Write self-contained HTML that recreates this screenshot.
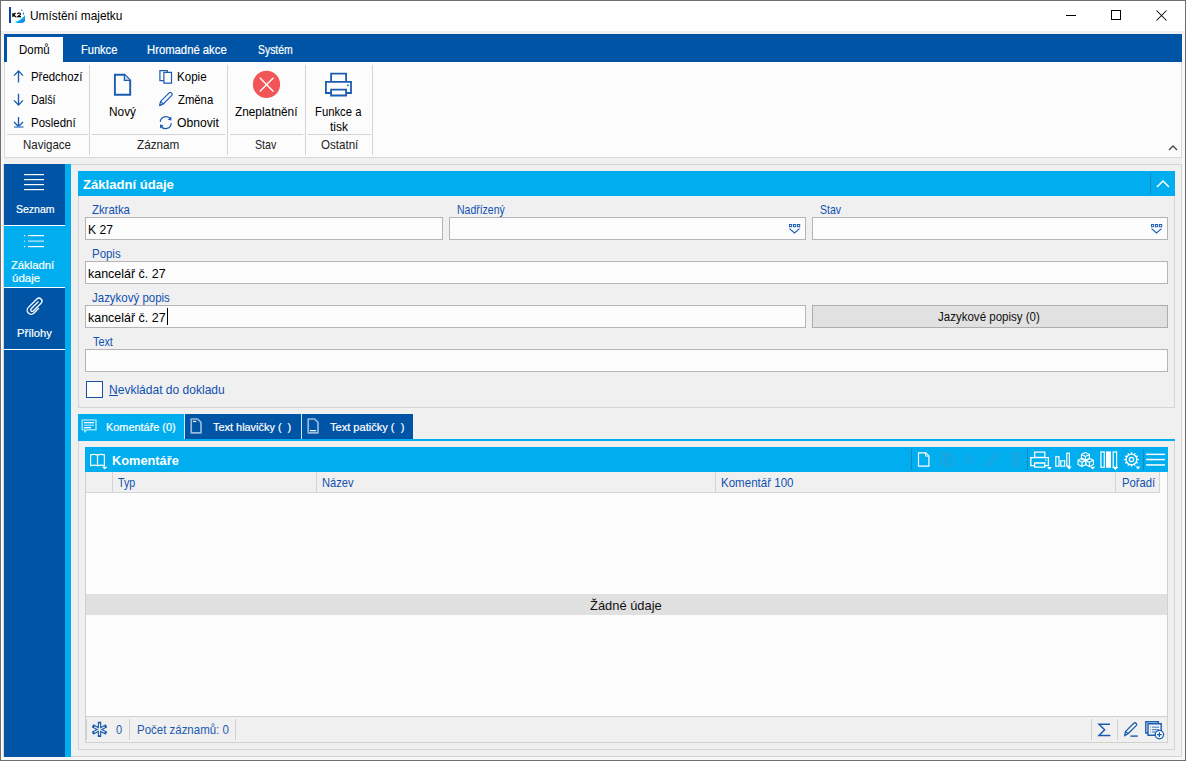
<!DOCTYPE html>
<html><head><meta charset="utf-8"><style>
html,body{margin:0;padding:0;width:1186px;height:761px;overflow:hidden;background:#f0f0f0}
.a{position:absolute}
.t{font-family:"Liberation Sans",sans-serif;white-space:nowrap}
</style></head><body>
<div class="a" style="left:0px;top:0px;width:1186px;height:761px;background:#f0f0f0;"></div>
<div class="a" style="left:0px;top:0px;width:1186px;height:31px;background:#ffffff;"></div>
<div class="a" style="left:1px;top:31px;width:3px;height:726px;background:#f8f8f8;"></div>
<div class="a" style="left:1182px;top:31px;width:3px;height:726px;background:#f8f8f8;"></div>
<div class="a" style="left:1px;top:757px;width:1184px;height:3px;background:#f8f8f8;"></div>
<div class="a" style="left:1px;top:31px;width:1184px;height:3px;background:#f0f0f0;"></div>
<div class="a" style="left:0px;top:0px;width:1186px;height:1px;background:#6e6e6e;"></div>
<div class="a" style="left:0px;top:760px;width:1186px;height:1px;background:#6e6e6e;"></div>
<div class="a" style="left:0px;top:0px;width:1px;height:761px;background:#6e6e6e;"></div>
<div class="a" style="left:1185px;top:0px;width:1px;height:761px;background:#6e6e6e;"></div>
<div class="a t" style="top:9px;color:#000;font-size:13px;line-height:13px;left:29.95px;transform-origin:0 0;transform:scaleX(0.9135);">Umístění majetku</div>
<div class="a" style="left:1066px;top:15px;width:10px;height:1px;background:#000;"></div>
<div class="a" style="left:1111px;top:10px;width:10px;height:10px;border:1px solid #000;box-sizing:border-box;"></div>
<svg class="a" style="left:1156.2px;top:9.5px;" width="11" height="11" viewBox="0 0 11 11"><path d="M0.5 0.5 L10.5 10.5 M10.5 0.5 L0.5 10.5" stroke="#000" stroke-width="1.05" fill="none"/></svg>
<div class="a" style="left:9px;top:7px;width:2px;height:16px;background:#0b46a8;"></div>
<svg class="a" style="left:0px;top:0px;" width="30" height="30" viewBox="0 0 30 30"><defs><linearGradient id="k2g" x1="0" y1="0" x2="1" y2="1"><stop offset="0" stop-color="#38f0c8"/><stop offset="0.5" stop-color="#10c8f0"/><stop offset="1" stop-color="#0a50f0"/></linearGradient></defs><path d="M12.9 13 V17 M13.2 15.2 L15.6 13 M13.6 14.8 L15.8 17" stroke="#000" stroke-width="1.2" fill="none"/><path d="M17.4 13.9 Q18 12.8 19.4 13 Q20.8 13.3 20.3 14.6 L17.6 16.6 H21" stroke="#000" stroke-width="1.1" fill="none"/><path d="M15 21.6 Q20.5 20.8 25 15 V20.4 Q24.5 22.8 21 22.9 L17 22.9 Q15.2 22.6 15 21.6 Z" fill="url(#k2g)"/><circle cx="21.6" cy="10.3" r="0.8" fill="#3a7af0"/><ellipse cx="23.4" cy="13.6" rx="0.6" ry="1.3" fill="#3a7af0"/></svg>
<div class="a" style="left:4px;top:34px;width:1178px;height:28px;background:#0054a6;"></div>
<div class="a" style="left:4px;top:62px;width:1178px;height:96px;background:#fcfcfc;border:1px solid #d9d9d9;box-sizing:border-box;border-top:none;"></div>
<div class="a" style="left:7px;top:37px;width:56px;height:25px;background:#fcfcfc;"></div>
<div class="a t" style="top:43px;color:#000;font-size:13px;line-height:13px;left:19.13px;transform-origin:0 0;transform:scaleX(0.8855);">Domů</div>
<div class="a t" style="top:43px;color:#fff;font-size:13px;line-height:13px;left:80.60px;transform-origin:0 0;transform:scaleX(0.8520);-webkit-text-stroke:0.2px #fff;">Funkce</div>
<div class="a t" style="top:43px;color:#fff;font-size:13px;line-height:13px;left:147.25px;transform-origin:0 0;transform:scaleX(0.8683);-webkit-text-stroke:0.2px #fff;">Hromadné akce</div>
<div class="a t" style="top:43px;color:#fff;font-size:13px;line-height:13px;left:257.63px;transform-origin:0 0;transform:scaleX(0.8016);-webkit-text-stroke:0.2px #fff;">Systém</div>
<div class="a" style="left:89px;top:65px;width:1px;height:90px;background:#d4d4d4;"></div>
<div class="a" style="left:227px;top:65px;width:1px;height:90px;background:#d4d4d4;"></div>
<div class="a" style="left:305px;top:65px;width:1px;height:90px;background:#d4d4d4;"></div>
<div class="a" style="left:372px;top:65px;width:1px;height:90px;background:#d4d4d4;"></div>
<div class="a" style="left:7px;top:134px;width:81px;height:1px;background:#d4d4d4;"></div>
<div class="a" style="left:92px;top:134px;width:133px;height:1px;background:#d4d4d4;"></div>
<div class="a" style="left:230px;top:134px;width:73px;height:1px;background:#d4d4d4;"></div>
<div class="a" style="left:308px;top:134px;width:63px;height:1px;background:#d4d4d4;"></div>
<div class="a t" style="top:138px;color:#222;font-size:13px;line-height:13px;left:22.86px;transform-origin:0 0;transform:scaleX(0.8849);">Navigace</div>
<div class="a t" style="top:138px;color:#222;font-size:13px;line-height:13px;left:137.00px;transform-origin:0 0;transform:scaleX(0.9017);">Záznam</div>
<div class="a t" style="top:138px;color:#222;font-size:13px;line-height:13px;left:255.25px;transform-origin:0 0;transform:scaleX(0.8196);">Stav</div>
<div class="a t" style="top:138px;color:#222;font-size:13px;line-height:13px;left:320.92px;transform-origin:0 0;transform:scaleX(0.8904);">Ostatní</div>
<div class="a t" style="top:70px;color:#000;font-size:13px;line-height:13px;left:30.52px;transform-origin:0 0;transform:scaleX(0.8783);">Předchozí</div>
<div class="a t" style="top:93px;color:#000;font-size:13px;line-height:13px;left:30.61px;transform-origin:0 0;transform:scaleX(0.8302);">Další</div>
<div class="a t" style="top:116px;color:#000;font-size:13px;line-height:13px;left:30.50px;transform-origin:0 0;transform:scaleX(0.8815);">Poslední</div>
<div class="a t" style="top:105px;color:#000;font-size:13px;line-height:13px;left:109.39px;transform-origin:0 0;transform:scaleX(0.9115);">Nový</div>
<div class="a t" style="top:70px;color:#000;font-size:13px;line-height:13px;left:177.48px;transform-origin:0 0;transform:scaleX(0.8904);">Kopie</div>
<div class="a t" style="top:93px;color:#000;font-size:13px;line-height:13px;left:177.70px;transform-origin:0 0;transform:scaleX(0.8693);">Změna</div>
<div class="a t" style="top:116px;color:#000;font-size:13px;line-height:13px;left:177.47px;transform-origin:0 0;transform:scaleX(0.9361);">Obnovit</div>
<div class="a t" style="top:105px;color:#000;font-size:13px;line-height:13px;left:235.35px;transform-origin:0 0;transform:scaleX(0.9092);">Zneplatnění</div>
<div class="a t" style="top:105px;color:#000;font-size:13px;line-height:13px;left:314.59px;transform-origin:0 0;transform:scaleX(0.8680);">Funkce a</div>
<div class="a t" style="top:120px;color:#000;font-size:13px;line-height:13px;left:330.00px;transform-origin:0 0;transform:scaleX(0.9282);">tisk</div>
<svg class="a" style="left:1167.5px;top:145px;" width="10" height="7" viewBox="0 0 10 7"><path d="M1 5 L5 1 L9 5" stroke="#444" stroke-width="1.3" fill="none"/></svg>
<svg class="a" style="left:0px;top:0px;" width="30" height="135" viewBox="0 0 30 135"><g stroke="#1a5cb0" stroke-width="1.3" fill="none"><path d="M18.5 71 V82.5 M14 75.6 L18.5 71 L23 75.6"/><path d="M18.5 93.7 V105.3 M14 100.4 L18.5 105 L23 100.4"/><path d="M18.5 117 V126.5 M14 122 L18.5 126.5 L23 122"/></g><path d="M14 127 H23.5" stroke="#5a8fd0" stroke-width="1.6"/></svg>
<svg class="a" style="left:0px;top:0px;" width="135" height="100" viewBox="0 0 135 100"><path d="M114.9 74.7 H124.6 L130.2 80.3 V94.7 H114.9 Z" stroke="#1a5cb0" stroke-width="1.9" fill="none" stroke-linejoin="miter"/><path d="M124.4 74.8 V80.4 H130.1" stroke="#1a5cb0" stroke-width="1.3" fill="#c9daf0"/></svg>
<svg class="a" style="left:0px;top:0px;" width="180" height="90" viewBox="0 0 180 90"><g stroke="#1a5cb0" stroke-width="1.2" fill="#fcfcfc"><path d="M159.9 70.6 H167.3 V80.6 H159.9 Z"/><path d="M163.9 72.4 H171.5 V83.2 H163.9 Z"/></g></svg>
<svg class="a" style="left:0px;top:0px;" width="180" height="110" viewBox="0 0 180 110"><g stroke="#1a5cb0" stroke-width="1.2" fill="none" stroke-linejoin="round"><path d="M159.6 105.6 L160.6 101.4 L169.2 92.8 Q170.2 92 171.2 92.8 L172 93.6 Q172.6 94.6 171.8 95.4 L163.2 104 Z"/><path d="M160.8 101.6 L163 103.8"/></g></svg>
<svg class="a" style="left:0px;top:0px;" width="180" height="132" viewBox="0 0 180 132"><g stroke="#1a5cb0" stroke-width="1.3" fill="none"><path d="M160.3 121.8 A5.6 5.6 0 0 1 170.6 119.2"/><path d="M171.2 123.2 A5.6 5.6 0 0 1 160.8 125.8"/></g><path d="M167.8 119.8 L171.4 120.4 L171.4 116.6 Z" fill="#1a5cb0"/><path d="M163.6 125.2 L160 124.6 L160 128.4 Z" fill="#1a5cb0"/></svg>
<svg class="a" style="left:0px;top:0px;" width="300" height="100" viewBox="0 0 300 100"><circle cx="266.5" cy="84.4" r="13.6" fill="#f15557"/><path d="M259.8 77.8 L273.4 91.4 M273.4 77.8 L259.8 91.4" stroke="#fff" stroke-width="1.4"/></svg>
<svg class="a" style="left:0px;top:0px;" width="360" height="100" viewBox="0 0 360 100"><g stroke="#1a5cb0" stroke-width="1.8" fill="#fcfcfc"><path d="M331.1 73.7 H346.1 V81.8 H331.1 Z"/><path d="M325.9 81.8 H351 V93 H325.9 Z"/><path d="M331.1 89.6 H346.1 V95.5 H331.1 Z"/></g><rect x="347.2" y="84.6" width="1.6" height="1.6" fill="#1a5cb0"/></svg>
<div class="a" style="left:3px;top:164px;width:1179px;height:593px;border:1px solid #d5d5d5;box-sizing:border-box;"></div>
<div class="a" style="left:4px;top:164px;width:61px;height:593px;background:#0054a6;"></div>
<div class="a" style="left:65px;top:164px;width:6px;height:593px;background:#00aeef;"></div>
<div class="a" style="left:4px;top:226px;width:61px;height:61px;background:#00aeef;"></div>
<div class="a" style="left:4px;top:225px;width:61px;height:1px;background:#ffffff;"></div>
<div class="a" style="left:4px;top:287px;width:61px;height:1px;background:#ffffff;"></div>
<div class="a" style="left:4px;top:349px;width:61px;height:1px;background:#ffffff;"></div>
<div class="a t" style="top:204px;color:#fff;font-size:11.5px;line-height:11.5px;left:15.80px;transform-origin:0 0;transform:scaleX(0.9142);-webkit-text-stroke:0.2px #fff;">Seznam</div>
<div class="a t" style="top:260px;color:#fff;font-size:11.5px;line-height:11.5px;left:11.20px;transform-origin:0 0;transform:scaleX(0.9779);-webkit-text-stroke:0.2px #fff;">Základní</div>
<div class="a t" style="top:273px;color:#fff;font-size:11.5px;line-height:11.5px;left:11.61px;transform-origin:0 0;transform:scaleX(0.9975);-webkit-text-stroke:0.2px #fff;">údaje</div>
<div class="a t" style="top:328px;color:#fff;font-size:11.5px;line-height:11.5px;left:17.24px;transform-origin:0 0;transform:scaleX(0.9701);-webkit-text-stroke:0.2px #fff;">Přílohy</div>
<div class="a" style="left:78px;top:171px;width:1097px;height:237px;border:1px solid #d5d5d5;box-sizing:border-box;"></div>
<div class="a" style="left:78px;top:171px;width:1097px;height:25px;background:#00aeef;"></div>
<div class="a t" style="top:178px;color:#fff;font-size:13.5px;line-height:13.5px;font-weight:bold;left:82.70px;transform-origin:0 0;transform:scaleX(0.9693);">Základní údaje</div>
<div class="a" style="left:1150px;top:173px;width:1px;height:21px;background:#1a86bf;"></div>
<svg class="a" style="left:1156px;top:180px;" width="14" height="9" viewBox="0 0 14 9"><path d="M1 7 L7 1 L13 7" stroke="#fff" stroke-width="1.5" fill="none"/></svg>
<div class="a" style="left:85px;top:217px;width:358px;height:23px;background:#fcfcfc;border:1px solid #b4b4b4;box-sizing:border-box;"></div>
<div class="a" style="left:449px;top:217px;width:357px;height:23px;background:#fcfcfc;border:1px solid #b4b4b4;box-sizing:border-box;"></div>
<div class="a" style="left:812px;top:217px;width:356px;height:23px;background:#fcfcfc;border:1px solid #b4b4b4;box-sizing:border-box;"></div>
<div class="a" style="left:85px;top:261px;width:1083px;height:23px;background:#fcfcfc;border:1px solid #b4b4b4;box-sizing:border-box;"></div>
<div class="a" style="left:85px;top:305px;width:721px;height:23px;background:#fcfcfc;border:1px solid #b4b4b4;box-sizing:border-box;"></div>
<div class="a" style="left:85px;top:349px;width:1083px;height:23px;background:#fcfcfc;border:1px solid #b4b4b4;box-sizing:border-box;"></div>
<div class="a" style="left:812px;top:305px;width:356px;height:23px;background:#e1e1e1;border:1px solid #adadad;box-sizing:border-box;"></div>
<div class="a t" style="top:203px;color:#1050b0;font-size:13px;line-height:13px;left:92.35px;transform-origin:0 0;transform:scaleX(0.8740);">Zkratka</div>
<div class="a t" style="top:203px;color:#1050b0;font-size:13px;line-height:13px;left:456.70px;transform-origin:0 0;transform:scaleX(0.8056);">Nadřízený</div>
<div class="a t" style="top:203px;color:#1050b0;font-size:13px;line-height:13px;left:819.63px;transform-origin:0 0;transform:scaleX(0.8070);">Stav</div>
<div class="a t" style="top:247px;color:#1050b0;font-size:13px;line-height:13px;left:92.15px;transform-origin:0 0;transform:scaleX(0.8805);">Popis</div>
<div class="a t" style="top:291px;color:#1050b0;font-size:13px;line-height:13px;left:92.35px;transform-origin:0 0;transform:scaleX(0.8832);">Jazykový popis</div>
<div class="a t" style="top:335px;color:#1050b0;font-size:13px;line-height:13px;left:93.00px;transform-origin:0 0;transform:scaleX(0.8339);">Text</div>
<div class="a t" style="top:223px;color:#000;font-size:13px;line-height:13px;left:88.36px;transform-origin:0 0;transform:scaleX(0.9328);">K 27</div>
<div class="a t" style="top:267px;color:#000;font-size:13px;line-height:13px;left:88.43px;transform-origin:0 0;transform:scaleX(0.9586);">kancelář č. 27</div>
<div class="a t" style="top:311px;color:#000;font-size:13px;line-height:13px;left:88.43px;transform-origin:0 0;transform:scaleX(0.9586);">kancelář č. 27</div>
<div class="a" style="left:167px;top:308px;width:1px;height:17px;background:#000;"></div>
<div class="a t" style="top:310px;color:#111;font-size:13px;line-height:13px;left:938.35px;transform-origin:0 0;transform:scaleX(0.8864);">Jazykové popisy (0)</div>
<div class="a" style="left:86px;top:381px;width:17px;height:17px;background:#fcfcfc;border:1px solid #1a4fa0;box-sizing:border-box;"></div>
<div class="a t" style="top:383px;color:#1050b0;font-size:13px;line-height:13px;left:109.26px;transform-origin:0 0;transform:scaleX(0.9258);">Nevkládat do dokladu</div>
<div class="a" style="left:109px;top:395px;width:9px;height:1px;background:#1050b0;"></div>
<div class="a" style="left:78px;top:414px;width:106px;height:25px;background:#00aeef;"></div>
<div class="a" style="left:184px;top:414px;width:1px;height:25px;background:#cfe9f7;"></div>
<div class="a" style="left:185px;top:414px;width:116px;height:25px;background:#0054a6;"></div>
<div class="a" style="left:301px;top:414px;width:1px;height:25px;background:#cfe9f7;"></div>
<div class="a" style="left:302px;top:414px;width:111px;height:25px;background:#0054a6;"></div>
<div class="a" style="left:78px;top:439px;width:1097px;height:2px;background:#00aeef;"></div>
<div class="a t" style="top:422px;color:#fff;font-size:11px;line-height:11px;left:106.29px;transform-origin:0 0;transform:scaleX(0.9909);-webkit-text-stroke:0.2px #fff;">Komentáře (0)</div>
<div class="a t" style="top:422px;color:#fff;font-size:11px;line-height:11px;left:213.45px;transform-origin:0 0;transform:scaleX(0.9925);-webkit-text-stroke:0.2px #fff;">Text hlavičky (  )</div>
<div class="a t" style="top:422px;color:#fff;font-size:11px;line-height:11px;left:330.00px;transform-origin:0 0;transform:scaleX(1.0052);-webkit-text-stroke:0.2px #fff;">Text patičky (  )</div>
<div class="a" style="left:78px;top:441px;width:1097px;height:309px;border:1px solid #d5d5d5;box-sizing:border-box;border-top:none;"></div>
<div class="a" style="left:85px;top:447px;width:1083px;height:25px;background:#00aeef;"></div>
<div class="a t" style="top:454px;color:#fff;font-size:13px;line-height:13px;font-weight:bold;left:112.35px;transform-origin:0 0;transform:scaleX(0.9828);">Komentáře</div>
<div class="a" style="left:85px;top:472px;width:1083px;height:245px;background:#fcfcfc;border:1px solid #d0d0d0;box-sizing:border-box;border-top:none;"></div>
<div class="a" style="left:86px;top:472px;width:1074px;height:20px;background:#f0f0f0;"></div>
<div class="a" style="left:86px;top:492px;width:1074px;height:1px;background:#d4d4d4;"></div>
<div class="a" style="left:112px;top:472px;width:1px;height:20px;background:#d4d4d4;"></div>
<div class="a" style="left:316px;top:472px;width:1px;height:20px;background:#d4d4d4;"></div>
<div class="a" style="left:715px;top:472px;width:1px;height:20px;background:#d4d4d4;"></div>
<div class="a" style="left:1115px;top:472px;width:1px;height:20px;background:#d4d4d4;"></div>
<div class="a" style="left:1159px;top:472px;width:1px;height:21px;background:#d4d4d4;"></div>
<div class="a t" style="top:476px;color:#1050b0;font-size:13px;line-height:13px;left:118.00px;transform-origin:0 0;transform:scaleX(0.8203);">Typ</div>
<div class="a t" style="top:476px;color:#1050b0;font-size:13px;line-height:13px;left:322.22px;transform-origin:0 0;transform:scaleX(0.8576);">Název</div>
<div class="a t" style="top:476px;color:#1050b0;font-size:13px;line-height:13px;left:721.16px;transform-origin:0 0;transform:scaleX(0.8882);">Komentář 100</div>
<div class="a t" style="top:476px;color:#1050b0;font-size:13px;line-height:13px;left:1121.88px;transform-origin:0 0;transform:scaleX(0.8671);">Pořadí</div>
<div class="a" style="left:86px;top:594px;width:1081px;height:21px;background:#e0e0e0;"></div>
<div class="a t" style="top:599px;color:#111;font-size:13px;line-height:13px;left:590.35px;transform-origin:0 0;transform:scaleX(0.9920);">Žádné údaje</div>
<div class="a" style="left:85px;top:716px;width:1083px;height:27px;background:#f0f0f0;border:1px solid #d0d0d0;box-sizing:border-box;"></div>
<div class="a" style="left:86px;top:719px;width:1px;height:21px;background:#d0d0d0;"></div>
<div class="a" style="left:129px;top:719px;width:1px;height:21px;background:#d0d0d0;"></div>
<div class="a" style="left:235px;top:719px;width:1px;height:21px;background:#d0d0d0;"></div>
<div class="a" style="left:1091px;top:719px;width:1px;height:21px;background:#d0d0d0;"></div>
<div class="a" style="left:1117px;top:719px;width:1px;height:21px;background:#d0d0d0;"></div>
<div class="a t" style="top:723px;color:#1a5ab0;font-size:13px;line-height:13px;left:115.81px;transform-origin:0 0;transform:scaleX(0.8524);">0</div>
<div class="a t" style="top:723px;color:#1a5ab0;font-size:13px;line-height:13px;left:136.59px;transform-origin:0 0;transform:scaleX(0.8824);">Počet záznamů: 0</div>
<svg class="a" style="left:0px;top:0px;" width="50" height="200" viewBox="0 0 50 200"><g fill="#fff"><rect x="24" y="174" width="20" height="1.2"/><rect x="24" y="179" width="20" height="1.2"/><rect x="24" y="184" width="20" height="1.2"/><rect x="24" y="189" width="20" height="1.2"/></g></svg>
<svg class="a" style="left:0px;top:0px;" width="50" height="250" viewBox="0 0 50 250"><g fill="#fff"><rect x="24" y="235" width="1.2" height="1.2"/><rect x="28" y="235" width="16" height="1.2"/><rect x="24" y="246" width="1.2" height="1.2"/><rect x="28" y="246" width="16" height="1.2"/></g><g fill="#fff" opacity="0.75"><rect x="24" y="240.5" width="1.2" height="1.2"/><rect x="28" y="240.5" width="16" height="1.2"/></g></svg>
<svg class="a" style="left:0px;top:0px;" width="60" height="330" viewBox="0 0 60 330"><path transform="translate(34 306) rotate(-45)" d="M5.6 0 L-4 0 A1.5 1.5 0 0 0 -4 3 L7 3 A3 3 0 0 0 7 -3 L-5 -3 A4 4 0 0 0 -5 5 L1.4 5" stroke="#fff" stroke-width="1.3" fill="none" stroke-linecap="round"/></svg>
<svg class="a" style="left:0px;top:0px;" width="803" height="240" viewBox="0 0 803 240"><rect x="789.5" y="224.5" width="2.2" height="2.2" fill="none" stroke="#2060b8" stroke-width="1"/><rect x="793.5" y="224.5" width="2.2" height="2.2" fill="none" stroke="#2060b8" stroke-width="1"/><rect x="797.5" y="224.5" width="2.2" height="2.2" fill="none" stroke="#2060b8" stroke-width="1"/><path d="M789.5 228.6 L794.5 233 L799.5 228.6" stroke="#2060b8" stroke-width="1.2" fill="none"/></svg>
<svg class="a" style="left:0px;top:0px;" width="1165" height="240" viewBox="0 0 1165 240"><rect x="1151.5" y="224.5" width="2.2" height="2.2" fill="none" stroke="#2060b8" stroke-width="1"/><rect x="1155.5" y="224.5" width="2.2" height="2.2" fill="none" stroke="#2060b8" stroke-width="1"/><rect x="1159.5" y="224.5" width="2.2" height="2.2" fill="none" stroke="#2060b8" stroke-width="1"/><path d="M1151.5 228.6 L1156.5 233 L1161.5 228.6" stroke="#2060b8" stroke-width="1.2" fill="none"/></svg>
<svg class="a" style="left:0px;top:0px;" width="100" height="440" viewBox="0 0 100 440"><path d="M82.2 420 H96 V429.8 H87 L84.8 432 V429.8 H82.2 Z" stroke="rgba(255,255,255,0.6)" stroke-width="1.6" fill="none" stroke-linejoin="round"/><rect x="84" y="422" width="10" height="1.3" fill="#fff"/><rect x="84" y="424.6" width="10" height="1.3" fill="rgba(255,255,255,0.6)"/><rect x="84" y="427" width="7" height="1.3" fill="#fff"/></svg>
<svg class="a" style="left:0px;top:0px;" width="210" height="440" viewBox="0 0 210 440"><path d="M191.2 419 H197.6 L201 422.4 V432.8 H191.2 Z" stroke="rgba(200,220,240,0.75)" stroke-width="1.7" fill="none" stroke-linejoin="round"/><rect x="193" y="420.8" width="3.2" height="1.3" fill="#fff"/></svg>
<svg class="a" style="left:0px;top:0px;" width="330" height="440" viewBox="0 0 330 440"><path d="M308.2 419 H314.6 L318 422.4 V432.8 H308.2 Z" stroke="rgba(200,220,240,0.75)" stroke-width="1.7" fill="none" stroke-linejoin="round"/><rect x="310" y="430" width="6.2" height="1.3" fill="#fff"/></svg>
<svg class="a" style="left:0px;top:0px;" width="110" height="472" viewBox="0 0 110 472"><g stroke="#fff" stroke-width="1.2" fill="none"><path d="M90.6 454.8 Q94 453.8 97.5 454.8 Q101 453.8 104.4 454.8 V465.6 Q101 464.6 97.5 465.6 Q94 464.6 90.6 465.6 Z"/><path d="M97.5 454.8 V466"/></g><path d="M102 466.8 H107.5 L104.7 469.6 Z" fill="#fff"/></svg>
<div class="a" style="left:911px;top:449px;width:1px;height:21px;background:#1788bd;"></div>
<div class="a" style="left:1027px;top:449px;width:1px;height:21px;background:#1788bd;"></div>
<div class="a" style="left:1143px;top:449px;width:1px;height:21px;background:#1788bd;"></div>
<svg class="a" style="left:0px;top:0px;" width="935" height="472" viewBox="0 0 935 472"><path d="M918.5 452.8 H925.8 L928.9 455.9 V466.2 H918.5 Z" stroke="#fff" stroke-width="1.2" fill="none"/><path d="M925.6 452.8 V456.1 H928.9" stroke="#fff" stroke-width="1" fill="none"/></svg>
<svg class="a" style="left:0px;top:0px;" width="960" height="472" viewBox="0 0 960 472"><g stroke="#22a0d8" stroke-width="1.2" fill="none"><path d="M940.2 453 H948 V463.8 H940.2 Z"/><path d="M944.8 454.8 H953 V466 H944.8 Z"/></g></svg>
<svg class="a" style="left:0px;top:0px;" width="980" height="472" viewBox="0 0 980 472"><path d="M966 454.5 L974 459.8 L966 465 Z" stroke="#22a0d8" stroke-width="1.2" fill="none" stroke-linejoin="round"/></svg>
<svg class="a" style="left:0px;top:0px;" width="1005" height="472" viewBox="0 0 1005 472"><path d="M986.6 465.8 L987.4 462.4 L996.4 453.6 Q997.4 452.8 998.4 453.8 Q999.2 454.8 998.4 455.6 L989.6 464.6 Z" stroke="#22a0d8" stroke-width="1.2" fill="none"/></svg>
<svg class="a" style="left:0px;top:0px;" width="1030" height="472" viewBox="0 0 1030 472"><g stroke="#22a0d8" stroke-width="1.2" fill="none"><path d="M1010.2 454.2 H1021"/><path d="M1013.6 454 V452.8 H1017.6 V454"/><path d="M1011.2 454.5 L1012 466 H1019.4 L1020.2 454.5"/><path d="M1014.6 457 V463.5 M1016.8 457 V463.5"/></g></svg>
<svg class="a" style="left:0px;top:0px;" width="1060" height="472" viewBox="0 0 1060 472"><g stroke="#fff" stroke-width="1.3" fill="none"><path d="M1034.6 452.2 H1044.8 V457.4 H1034.6 Z"/><path d="M1030.8 457.6 H1048.4 V465.6 H1030.8 Z"/><path d="M1034.6 463 H1044.8 V467.2 H1034.6 Z" fill="#00aeef"/></g><rect x="1045" y="459.6" width="1.4" height="1" fill="#fff"/><path d="M1047 467 H1052 L1049.5 469.8 Z" fill="#fff"/></svg>
<svg class="a" style="left:0px;top:0px;" width="1080" height="472" viewBox="0 0 1080 472"><g stroke="#fff" stroke-width="1.2" fill="none"><rect x="1055.8" y="456.8" width="3.2" height="9.4"/><rect x="1060.8" y="460.8" width="3.8" height="5.4"/><rect x="1066.8" y="453.2" width="2.6" height="13"/></g><path d="M1066.6 466.6 H1071.8 L1069.2 469.4 Z" fill="#fff"/></svg>
<svg class="a" style="left:0px;top:0px;" width="1100" height="472" viewBox="0 0 1100 472"><g stroke="#fff" stroke-width="1.1" fill="none" stroke-linejoin="round"><path d="M1085.4 452.6 L1089.4 454.6 V459.0 L1085.4 461.0 L1081.4 459.0 V454.6 Z M1081.4 454.6 L1085.4 456.6 L1089.4 454.6 M1085.4 456.6 V461.0"/><path d="M1082 458.2 L1086 460.2 V464.59999999999997 L1082 466.59999999999997 L1078 464.59999999999997 V460.2 Z M1078 460.2 L1082 462.2 L1086 460.2 M1082 462.2 V466.59999999999997"/><path d="M1089.4 458.2 L1093.4 460.2 V464.59999999999997 L1089.4 466.59999999999997 L1085.4 464.59999999999997 V460.2 Z M1085.4 460.2 L1089.4 462.2 L1093.4 460.2 M1089.4 462.2 V466.59999999999997"/></g><path d="M1090 466.8 H1095.2 L1092.6 469.6 Z" fill="#fff"/></svg>
<svg class="a" style="left:0px;top:0px;" width="1125" height="472" viewBox="0 0 1125 472"><g stroke="#fff" stroke-width="1.2" fill="none"><rect x="1100.9" y="451.9" width="3.4" height="15.4"/><rect x="1113.2" y="451.9" width="3.4" height="15.4"/></g><rect x="1106" y="451.4" width="5" height="16.4" fill="#fff"/><path d="M1112.2 467 H1118.6 L1115.4 470 Z" fill="#fff"/></svg>
<svg class="a" style="left:0px;top:0px;" width="1145" height="472" viewBox="0 0 1145 472"><g fill="#fff"><rect x="1130.8" y="452.3" width="1.4" height="2" transform="rotate(0 1131.5 459.5)"/><rect x="1130.8" y="452.3" width="1.4" height="2" transform="rotate(30 1131.5 459.5)"/><rect x="1130.8" y="452.3" width="1.4" height="2" transform="rotate(60 1131.5 459.5)"/><rect x="1130.8" y="452.3" width="1.4" height="2" transform="rotate(90 1131.5 459.5)"/><rect x="1130.8" y="452.3" width="1.4" height="2" transform="rotate(120 1131.5 459.5)"/><rect x="1130.8" y="452.3" width="1.4" height="2" transform="rotate(150 1131.5 459.5)"/><rect x="1130.8" y="452.3" width="1.4" height="2" transform="rotate(180 1131.5 459.5)"/><rect x="1130.8" y="452.3" width="1.4" height="2" transform="rotate(210 1131.5 459.5)"/><rect x="1130.8" y="452.3" width="1.4" height="2" transform="rotate(240 1131.5 459.5)"/><rect x="1130.8" y="452.3" width="1.4" height="2" transform="rotate(270 1131.5 459.5)"/><rect x="1130.8" y="452.3" width="1.4" height="2" transform="rotate(300 1131.5 459.5)"/><rect x="1130.8" y="452.3" width="1.4" height="2" transform="rotate(330 1131.5 459.5)"/></g><circle cx="1131.5" cy="459.5" r="5.4" stroke="#fff" stroke-width="1.3" fill="none"/><circle cx="1131.5" cy="459.5" r="2.2" stroke="#fff" stroke-width="1.2" fill="none"/><path d="M1135.6 466.6 H1140.4 L1138 469.4 Z" fill="#fff"/></svg>
<svg class="a" style="left:0px;top:0px;" width="1170" height="472" viewBox="0 0 1170 472"><g fill="#fff"><rect x="1146" y="453.6" width="19" height="1.5"/><rect x="1146" y="458.8" width="19" height="1.5"/><rect x="1146" y="464.2" width="19" height="1.5"/></g></svg>
<svg class="a" style="left:0px;top:0px;" width="110" height="742" viewBox="0 0 110 742"><g stroke="#1a5cb0" stroke-width="3.4" stroke-linecap="square"><path d="M99.5 723.4 V735.4 M94 726.5 L105 732.4 M94 732.4 L105 726.5"/></g><g stroke="#f0f0f0" stroke-width="1.1"><path d="M99.5 723.6 V735.2 M94.3 726.7 L104.7 732.2 M94.3 732.2 L104.7 726.7"/></g></svg>
<svg class="a" style="left:0px;top:0px;" width="1115" height="742" viewBox="0 0 1115 742"><path d="M1110 724.2 H1099 L1104.6 729.8 L1099 735.4 H1110.4" stroke="#1a5cb0" stroke-width="1.5" fill="none" stroke-linejoin="miter"/></svg>
<svg class="a" style="left:0px;top:0px;" width="1145" height="742" viewBox="0 0 1145 742"><path d="M1124.6 735.8 L1125.6 731.4 L1133.8 723.2 Q1135 722.2 1136.2 723.4 Q1137.2 724.6 1136.2 725.6 L1128 733.8 Z M1125.6 731.4 L1128 733.8" stroke="#1a5cb0" stroke-width="1.3" fill="none" stroke-linejoin="round"/><rect x="1130.4" y="735.4" width="7.4" height="1.4" fill="#1a5cb0"/></svg>
<svg class="a" style="left:0px;top:0px;" width="1168" height="742" viewBox="0 0 1168 742"><g stroke="#1a5cb0" stroke-width="1.4" fill="#f0f0f0"><path d="M1145.8 721.8 H1158.4 V733 H1145.8 Z"/><path d="M1148 723.8 H1161.2 V735.2 H1148 Z"/></g><g fill="#5a8fd0"><rect x="1150" y="726.6" width="1" height="1"/><rect x="1152" y="726.6" width="7" height="1.2"/><rect x="1150" y="729" width="1" height="1"/><rect x="1152" y="729" width="7" height="1.2"/><rect x="1150" y="731.4" width="1" height="1"/><rect x="1152" y="731.4" width="5" height="1.2"/></g><circle cx="1159.4" cy="734.6" r="4.2" stroke="#1a5cb0" stroke-width="1.3" fill="#fff"/><path d="M1159.4 732.2 V737 M1157 734.6 H1161.8" stroke="#1a5cb0" stroke-width="1.3"/></svg>
</body></html>
